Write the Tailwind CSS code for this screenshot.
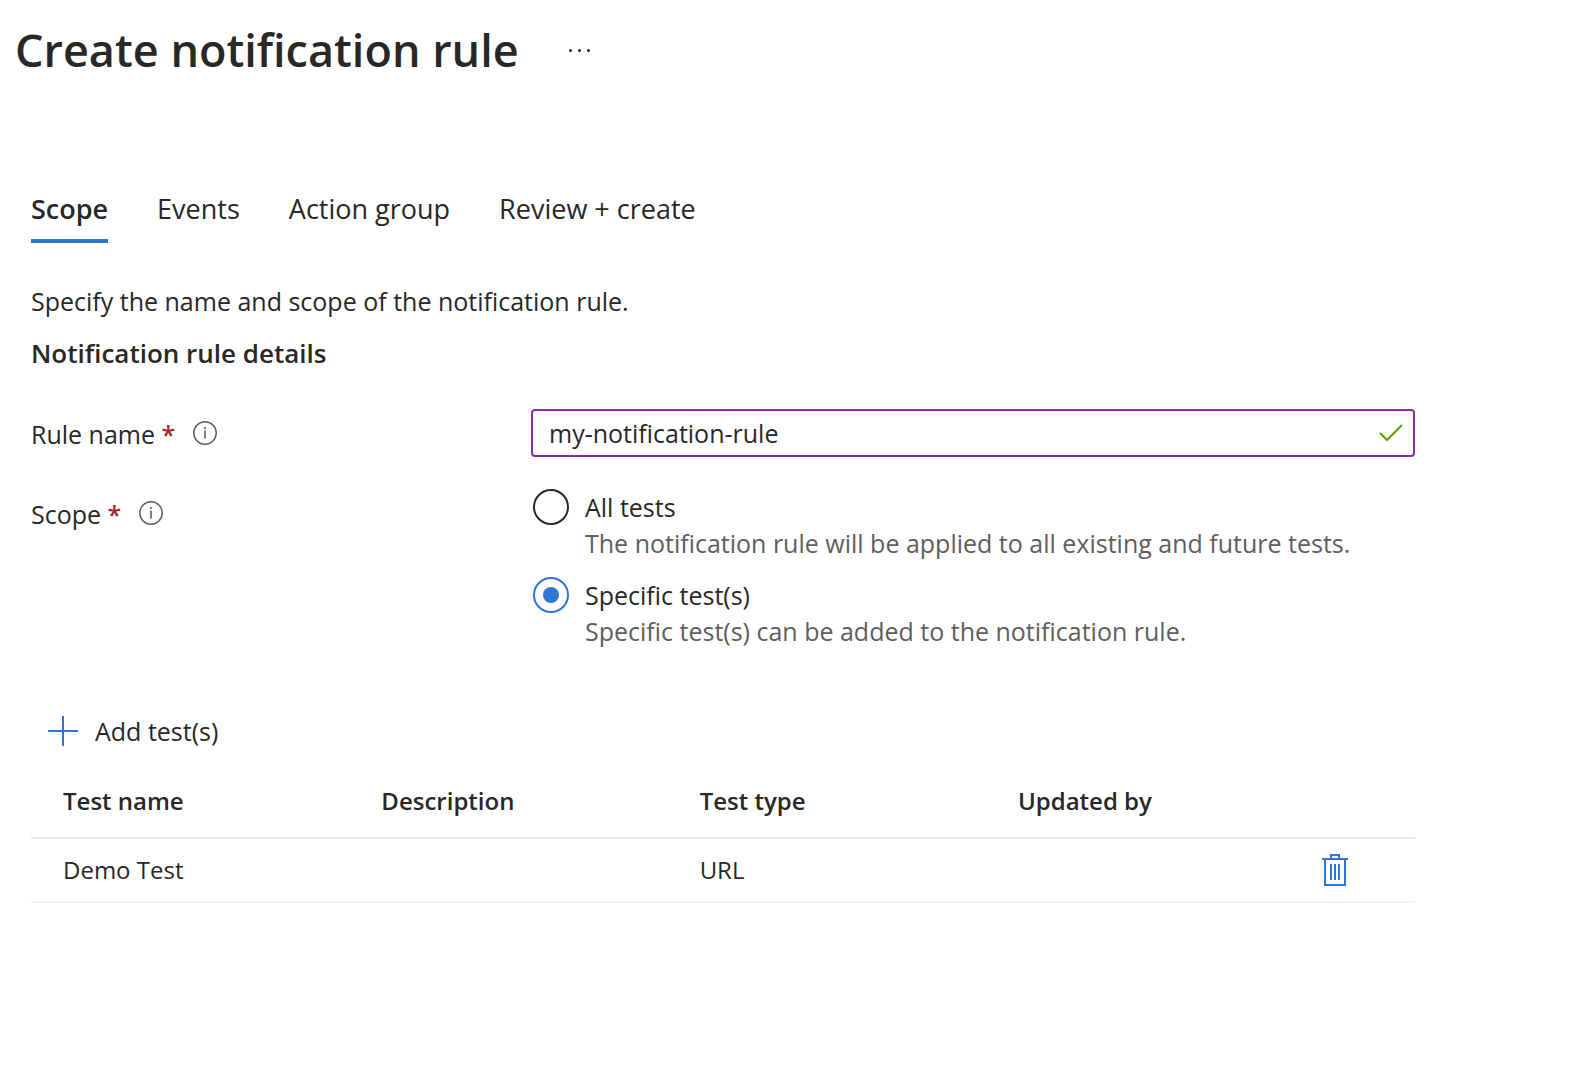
<!DOCTYPE html>
<html lang="en">
<head>
    <meta charset="UTF-8">
    <meta name="viewport" content="width=device-width, initial-scale=1.0">
    <title>Create notification rule</title>
    <script src="https://cdn.jsdelivr.net/npm/@tailwindcss/browser@4"></script>
</head>
<body class="bg-white text-[#292827] font-['Segoe_UI','Open_Sans',sans-serif] text-[25px] leading-9">
    <!-- Title bar -->
    <header class="flex items-center gap-[46px] px-[15px] pt-5">
        <h1 class="text-[45px] leading-[60px] font-semibold">Create notification rule</h1>
        <button type="button" aria-label="More options" class="flex items-center gap-[6px] p-1">
            <span class="size-[3px] rounded-full bg-[#292827]"></span>
            <span class="size-[3px] rounded-full bg-[#292827]"></span>
            <span class="size-[3px] rounded-full bg-[#292827]"></span>
        </button>
    </header>

    <main class="pl-[31px] pr-[169px] pt-[111px]">
        <!-- Tabs -->
        <div role="tablist" class="flex gap-[49px] text-[27px]">
            <button type="button" role="tab" aria-selected="true" class="border-b-4 border-[#2f76d4] pb-3 font-semibold">Scope</button>
            <button type="button" role="tab" aria-selected="false" class="border-b-4 border-transparent pb-3">Events</button>
            <button type="button" role="tab" aria-selected="false" class="border-b-4 border-transparent pb-3">Action group</button>
            <button type="button" role="tab" aria-selected="false" class="border-b-4 border-transparent pb-3">Review + create</button>
        </div>

        <p class="mt-10">Specify the name and scope of the notification rule.</p>
        <h2 class="mt-4 text-[26px] font-semibold">Notification rule details</h2>

        <form class="mt-[38px]">
            <!-- Rule name -->
            <div class="flex items-center">
                <div class="flex w-[500px] shrink-0 items-center pt-0.5">
                    <label for="rule-name">Rule name <span class="font-semibold text-[#a4262c]">*</span></label>
                    <svg class="mb-0.5 ml-[18px] size-6" viewBox="0 0 24 24" fill="none" stroke="#605e5c" role="img" aria-label="Info">
                        <circle cx="12" cy="12" r="11.2" stroke-width="1.5"/>
                        <path d="M12 9.5v8M12 6v2" stroke-width="1.6"/>
                    </svg>
                </div>
                <div class="relative flex-1">
                    <input id="rule-name" type="text" value="my-notification-rule" class="block h-12 w-full rounded-[4px] border-2 border-[#8a2da5] px-4 outline-none">
                    <svg class="absolute right-3 top-3 size-6" viewBox="0 0 24 24" fill="none" stroke="#57a300" stroke-width="2" aria-hidden="true">
                        <path d="M1 12l7 7L23 4"/>
                    </svg>
                </div>
            </div>

            <!-- Scope -->
            <div role="radiogroup" aria-labelledby="scope-label" class="mt-8 flex items-start">
                <div class="flex w-[502px] shrink-0 items-center pt-[7px]">
                    <span id="scope-label">Scope <span class="font-semibold text-[#a4262c]">*</span></span>
                    <svg class="mb-0.5 ml-[18px] size-6" viewBox="0 0 24 24" fill="none" stroke="#605e5c" role="img" aria-label="Info">
                        <circle cx="12" cy="12" r="11.2" stroke-width="1.5"/>
                        <path d="M12 9.5v8M12 6v2" stroke-width="1.6"/>
                    </svg>
                </div>
                <div class="flex flex-col gap-4">
                    <div class="flex items-start gap-4">
                        <input id="scope-all" name="scope" type="radio" aria-describedby="scope-all-hint" class="size-9 shrink-0 appearance-none rounded-full border-2 border-[#292827] checked:border-[#2f76d4] checked:bg-[#2f76d4] checked:bg-clip-content checked:p-2">
                        <div>
                            <label for="scope-all" class="block">All tests</label>
                            <p id="scope-all-hint" class="text-[#605e5c]">The notification rule will be applied to all existing and future tests.</p>
                        </div>
                    </div>
                    <div class="flex items-start gap-4">
                        <input id="scope-specific" name="scope" type="radio" checked aria-describedby="scope-specific-hint" class="size-9 shrink-0 appearance-none rounded-full border-2 border-[#292827] checked:border-[#2f76d4] checked:bg-[#2f76d4] checked:bg-clip-content checked:p-2">
                        <div>
                            <label for="scope-specific" class="block">Specific test(s)</label>
                            <p id="scope-specific-hint" class="text-[#605e5c]">Specific test(s) can be added to the notification rule.</p>
                        </div>
                    </div>
                </div>
            </div>
        </form>

        <!-- Tests -->
        <button type="button" class="mt-16 ml-[17px] flex items-center gap-[17px]">
            <svg class="size-[30px]" viewBox="0 0 30 30" stroke="#2f76d4" stroke-width="2" aria-hidden="true">
                <path d="M15 0v30M0 15h30"/>
            </svg>
            <span>Add test(s)</span>
        </button>

        <table class="mt-4 w-full table-fixed text-left text-2xl">
            <thead>
                <tr class="h-[73px] border-b-2 border-[#eaeaea]">
                    <th class="w-[23%] pl-8 font-semibold">Test name</th>
                    <th class="w-[23%] pl-8 font-semibold">Description</th>
                    <th class="w-[23%] pl-8 font-semibold">Test type</th>
                    <th class="w-[23%] pl-8 font-semibold">Updated by</th>
                    <th aria-label="Actions"></th>
                </tr>
            </thead>
            <tbody>
                <tr class="h-16 border-b-2 border-[#f2f2f2]">
                    <td class="pl-8">Demo Test</td>
                    <td class="pl-8"></td>
                    <td class="pl-8">URL</td>
                    <td class="pl-8"></td>
                    <td class="pl-[18px]">
                        <button type="button" aria-label="Delete Demo Test" class="block">
                            <svg class="h-8 w-[26px]" viewBox="0 0 26 32" fill="none" stroke="#2f76d4" stroke-width="2" aria-hidden="true">
                                <path d="M0 5h26M9 5V1h8v4M3 5v26h20V5M9 10v16M13 10v16M17 10v16"/>
                            </svg>
                        </button>
                    </td>
                </tr>
            </tbody>
        </table>
    </main>
</body>
</html>
